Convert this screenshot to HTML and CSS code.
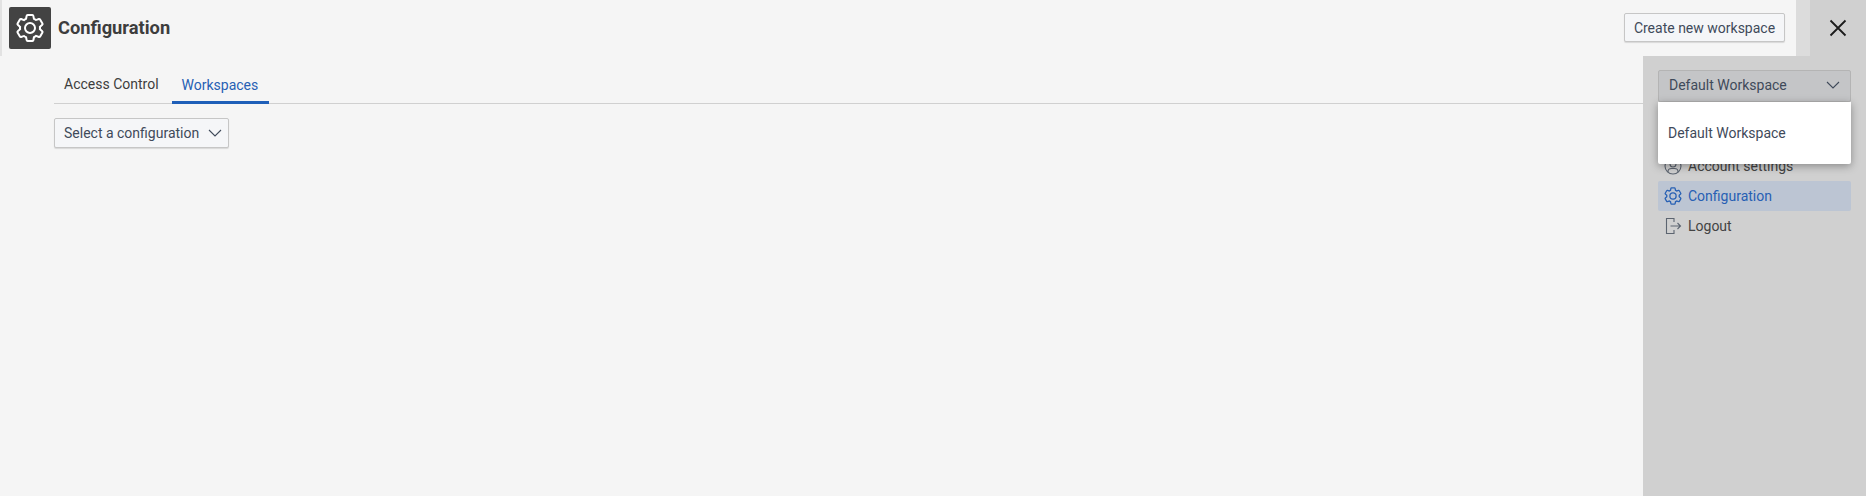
FILE: index.html
```html
<!DOCTYPE html>
<html lang="en">
<head>
  <meta charset="UTF-8">
  <meta name="viewport" content="width=device-width, initial-scale=1.0">
  <title>Configuration</title>
  <link rel="stylesheet" href="styles.css">
</head>
<body>
  <svg class="defs" aria-hidden="true">
    <symbol id="gear" viewBox="0 0 32 32">
      <path d="M27,16.76c0-.25,0-.5,0-.76s0-.51,0-.77l1.92-1.68A2,2,0,0,0,29.3,11L26.94,7a2,2,0,0,0-1.73-1,2,2,0,0,0-.64.1l-2.43.82a11.35,11.35,0,0,0-1.31-.75l-.51-2.52a2,2,0,0,0-2-1.61H13.64a2,2,0,0,0-2,1.61l-.51,2.52a11.48,11.48,0,0,0-1.32.75L7.43,6.06A2,2,0,0,0,6.79,6,2,2,0,0,0,5.06,7L2.7,11a2,2,0,0,0,.41,2.51L5,15.24c0,.25,0,.5,0,.76s0,.51,0,.77L3.11,18.45A2,2,0,0,0,2.7,21L5.06,25a2,2,0,0,0,1.73,1,2,2,0,0,0,.64-.1l2.43-.82a11.35,11.35,0,0,0,1.31.75l.51,2.52a2,2,0,0,0,2,1.61h4.72a2,2,0,0,0,2-1.61l.51-2.52a11.48,11.48,0,0,0,1.32-.75l2.42.82a2,2,0,0,0,.64.1,2,2,0,0,0,1.73-1L29.3,21a2,2,0,0,0-.41-2.51ZM25.21,24l-3.43-1.16a8.86,8.86,0,0,1-2.71,1.57L18.36,28H13.64l-.71-3.55a9.36,9.36,0,0,1-2.7-1.57L6.79,24,4.43,20l2.72-2.4a8.9,8.9,0,0,1,0-3.13L4.43,12,6.79,8l3.43,1.16a8.86,8.86,0,0,1,2.71-1.57L13.64,4h4.72l.71,3.55a9.36,9.36,0,0,1,2.7,1.57L25.21,8,27.57,12l-2.72,2.4a8.9,8.9,0,0,1,0,3.13L27.57,20Z"/>
      <path d="M16,22a6,6,0,1,1,6-6A5.94,5.94,0,0,1,16,22Zm0-10a3.91,3.91,0,0,0-4,4,3.91,3.91,0,0,0,4,4,3.91,3.91,0,0,0,4-4A3.91,3.91,0,0,0,16,12Z"/>
    </symbol>
    <symbol id="chevron" viewBox="0 0 14 8">
      <path d="M1 1l6 6 6-6" fill="none" stroke="currentColor" stroke-width="1.1"/>
    </symbol>
  </svg>

  <header class="header">
    <div class="header-icon"><svg class="header-gear"><use href="#gear"/></svg></div>
    <h1 class="title">Configuration</h1>
    <button class="btn new-btn">Create new workspace</button>
    <div class="header-strip"></div>
    <div class="close">
      <svg class="close-icon" viewBox="0 0 18 18"><path d="M1.5 1.5l15 15M16.5 1.5l-15 15" stroke="#1c1c1c" stroke-width="1.8"/></svg>
    </div>
  </header>

  <div class="page">
    <main class="main">
      <nav class="tabs">
        <a class="tab">Access Control</a>
        <a class="tab tab-active">Workspaces</a>
      </nav>
      <button class="btn select-btn">Select a configuration<svg class="chevron"><use href="#chevron"/></svg></button>
    </main>

    <aside class="panel">
      <div class="ws-select">Default Workspace<svg class="chevron"><use href="#chevron"/></svg></div>
      <div class="ws-menu">Default Workspace</div>
      <ul class="menu">
        <li class="menu-item">
          <svg class="menu-icon line-icon" viewBox="-1 -1 20 20"><circle cx="9" cy="9" r="8"/><circle cx="9" cy="7" r="3"/><path d="M4 15.200V14.500c0-2 1.500-3 3.500-3h3c2 0 3.500 1 3.500 3v.7"/></svg>
          Account settings
        </li>
        <li class="menu-item menu-item-active"><svg class="menu-icon"><use href="#gear"/></svg>Configuration</li>
        <li class="menu-item">
          <svg class="menu-icon line-icon" viewBox="-1 -1 20 20"><path d="M10 5V1.500H2.500v15H10V13M6.500 9h10M13.500 6l3 3-3 3"/></svg>
          Logout
        </li>
      </ul>
    </aside>
  </div>
</body>
</html>
```

FILE: styles.css
```css
* {
  box-sizing: border-box;
}
body {
  margin: 0;
  height: 100vh;
  overflow: hidden;
  display: flex;
  flex-direction: column;
  font-family: Roboto, sans-serif;
  font-size: 14px;
  color: #3d3d3d;
  background-color: #f5f5f5;
}
.defs {
  display: none;
}
.header {
  height: 56px;
  flex-shrink: 0;
  display: flex;
  align-items: center;
  border-left: 2px solid #e2e2e2;
  padding-left: 7px;
}
.header-icon {
  width: 42px;
  height: 42px;
  border-radius: 2px;
  background-color: #434343;
  display: flex;
  align-items: center;
  justify-content: center;
}
.header-gear {
  width: 32px;
  height: 32px;
  fill: #fff;
}
.title {
  margin: 0 0 2px 7px;
  flex: 1;
  font-size: 18.3px;
  font-weight: 700;
  color: #3d3d3d;
}
.btn {
  font-family: inherit;
  font-size: 14px;
  color: #3f4a5a;
  background-color: #f5f6f8;
  border: 1px solid #c6c6c6;
  border-radius: 2px;
  box-shadow: 0 1px 1px rgba(0,0,0,0.12);
  padding: 0;
}
.new-btn {
  width: 161px;
  height: 29px;
  margin-bottom: 1px;
}
.header-strip {
  width: 14px;
  height: 100%;
  margin-left: 11px;
  background-color: #dcdcdc;
}
.close {
  width: 56px;
  height: 100%;
  background-color: #d0d0d0;
  display: flex;
  align-items: center;
  justify-content: center;
}
.close-icon {
  width: 18px;
  height: 18px;
}
.page {
  flex: 1;
  display: flex;
}
.main {
  flex: 1;
  padding-left: 54px;
}
.tabs {
  height: 48px;
  display: flex;
  align-items: flex-end;
  gap: 3px;
  border-bottom: 1px solid #d0d0d0;
}
.tab {
  height: 37px;
  padding: 10px 10px 0;
  color: #3d3d3d;
}
.tab-active {
  padding-right: 11px;
  color: #2760b4;
  border-bottom: 3px solid #1f5fb8;
  margin-bottom: -1px;
}
.select-btn {
  width: 175px;
  height: 30px;
  margin-top: 14px;
  display: flex;
  align-items: center;
  justify-content: space-between;
  padding: 0 6px 0 9px;
}
.chevron {
  width: 14px;
  height: 8px;
  flex-shrink: 0;
}
.panel {
  width: 223px;
  padding: 14px 15px 0;
  background-color: #d0d0d0;
  position: relative;
}
.ws-select {
  height: 32px;
  display: flex;
  align-items: center;
  justify-content: space-between;
  padding: 0 10px 2px;
  color: #3f4a5a;
  background-color: #c4c5c7;
  border: 1px solid #b4b4b4;
  border-radius: 2px;
}
.ws-menu {
  position: absolute;
  top: 46px;
  left: 15px;
  right: 15px;
  height: 62px;
  z-index: 2;
  display: flex;
  align-items: center;
  padding-left: 10px;
  color: #3f4a5a;
  background-color: #fff;
  border-radius: 0 0 2px 2px;
  box-shadow: 0 2px 8px rgba(0,0,0,0.35);
}
.menu {
  list-style: none;
  margin: 49px 0 0;
  padding: 0;
}
.menu-item {
  height: 30px;
  display: flex;
  align-items: center;
  gap: 5px;
  padding-left: 5px;
  color: #434343;
}
.menu-item-active {
  color: #2760b4;
  background-color: #bcc5d3;
  border-radius: 2px;
}
.menu-icon {
  width: 20px;
  height: 20px;
  fill: currentColor;
  flex-shrink: 0;
}
.line-icon {
  fill: none;
  stroke: #5c6470;
  stroke-width: 1.1;
}
```
